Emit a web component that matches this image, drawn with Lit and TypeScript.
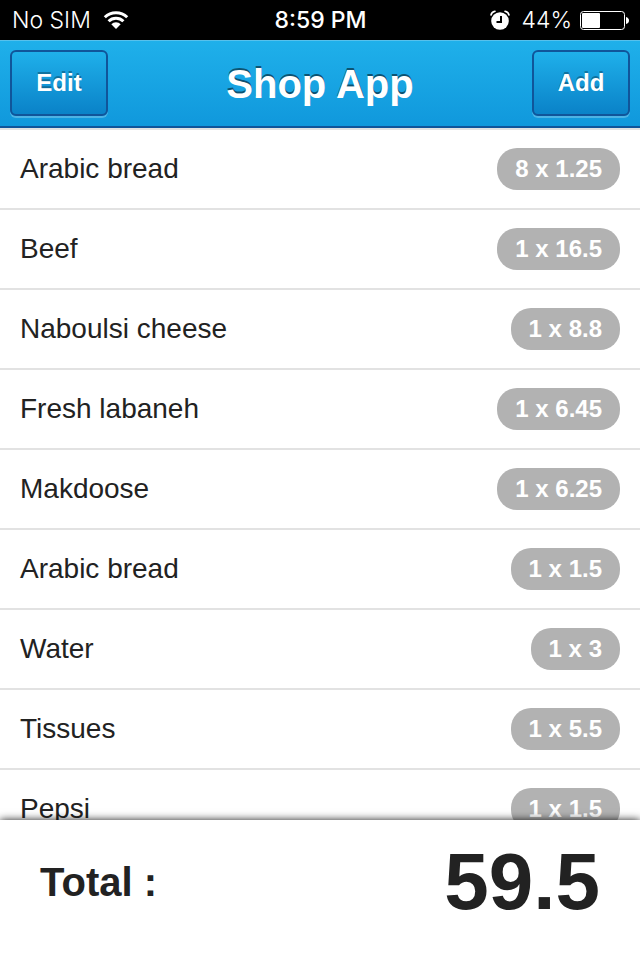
import { LitElement, html, css } from "lit";
import { customElement, property, state } from "lit/decorators.js";

interface Item {
  name: string;
  quantity: number;
  price: number;
}

@customElement("status-bar")
class StatusBar extends LitElement {
  @property({ type: Number }) battery = 44;

  static styles = css`
    :host {
      display: grid;
      grid-template-columns: 1fr auto 1fr;
      align-items: center;
      height: 40px;
      padding: 0 11px 0 12px;
      background: #000;
      color: #fff;
      font-family: Inter, "Liberation Sans", sans-serif;
      font-size: 23px;
      font-weight: 300;
      line-height: 40px;
    }
    .side {
      display: flex;
      align-items: center;
    }
    .wifi {
      margin-left: 12px;
    }
    .time {
      font-weight: 500;
    }
    .right {
      justify-content: flex-end;
    }
    .alarm {
      margin-right: 12px;
    }
    .battery {
      margin-left: 8px;
    }
    svg {
      display: block;
    }
  `;

  render() {
    return html`
      <div class="side">
        <span>No SIM</span>
        <svg class="wifi" width="26" height="20" viewBox="0 0 26 20" aria-label="Wi-Fi">
          <g fill="none" stroke="#fff" stroke-width="3">
            <path d="M1.8 7.2A16 16 0 0 1 24.2 7.2" />
            <path d="M5.6 11.2A10.5 10.5 0 0 1 20.4 11.2" />
          </g>
          <path fill="#fff" d="M13 19L8.3 14.3A6.6 6.6 0 0 1 17.7 14.3Z" />
        </svg>
      </div>
      <span class="time">8:59 PM</span>
      <div class="side right">
        <svg class="alarm" width="20" height="20" viewBox="0 0 20 20" aria-label="Alarm">
          <circle cx="10" cy="11" r="8.8" fill="#fff" />
          <path d="M11 6v6H6.5" fill="none" stroke="#000" stroke-width="2" />
          <path
            d="M1 5Q1.5 2 5 1.2M19 5Q18.5 2 15 1.2"
            fill="none"
            stroke="#fff"
            stroke-width="1.6"
            stroke-linecap="round"
          />
        </svg>
        <span>${this.battery}%</span>
        <svg class="battery" width="49" height="20" viewBox="0 0 49 20" aria-label="Battery">
          <rect x="0.5" y="1.5" width="44" height="18" rx="3" fill="none" stroke="#fff" />
          <rect x="2" y="3" width=${Math.round(this.battery * 0.41)} height="15" rx="1" fill="#fff" />
          <path d="M46 7q3 1 3 3.500t-3 3.500z" fill="#fff" />
        </svg>
      </div>
    `;
  }
}

@customElement("shop-row")
class ShopRow extends LitElement {
  @property({ attribute: false }) item!: Item;

  static styles = css`
    :host {
      display: flex;
      align-items: center;
      justify-content: space-between;
      box-sizing: border-box;
      min-height: 80px;
      padding: 0 20px;
      border-top: 2px solid #e2e2e2;
      color: #222;
      font-size: 28px;
      line-height: 32px;
    }
    .badge {
      padding: 0 18px;
      border-radius: 20px;
      background: #b2b2b2;
      color: #fff;
      font-size: 24px;
      font-weight: 700;
      line-height: 42px;
      white-space: nowrap;
    }
  `;

  render() {
    return html`
      <span>${this.item.name}</span>
      <span class="badge">${this.item.quantity} x ${this.item.price}</span>
    `;
  }
}

@customElement("app-root")
class AppRoot extends LitElement {
  @state() private items: Item[] = [
    { name: "Arabic bread", quantity: 8, price: 1.25 },
    { name: "Beef", quantity: 1, price: 16.5 },
    { name: "Naboulsi cheese", quantity: 1, price: 8.8 },
    { name: "Fresh labaneh", quantity: 1, price: 6.45 },
    { name: "Makdoose", quantity: 1, price: 6.25 },
    { name: "Arabic bread", quantity: 1, price: 1.5 },
    { name: "Water", quantity: 1, price: 3 },
    { name: "Tissues", quantity: 1, price: 5.5 },
    { name: "Pepsi", quantity: 1, price: 1.5 },
  ];

  static styles = css`
    :host {
      display: flex;
      flex-direction: column;
      height: 100vh;
      overflow: hidden;
      background: #fff;
      color: #222;
      font-family: "Liberation Sans", Arial, sans-serif;
    }
    .header {
      display: flex;
      align-items: center;
      justify-content: space-between;
      padding: 9px 10px;
      border-top: 1px solid #57c1ec;
      border-bottom: 2px solid #10559a;
      background: linear-gradient(#1fb0ea, #1098dc);
      color: #fff;
    }
    .title {
      margin: 0;
      font-size: 40px;
      font-weight: 700;
      line-height: 48px;
      text-shadow: 0 -2px 0 rgba(0, 0, 0, 0.5);
    }
    .button {
      box-sizing: border-box;
      width: 98px;
      height: 66px;
      margin: 0 0 1px;
      padding: 0;
      border: 2px solid #10559a;
      border-radius: 6px;
      background: linear-gradient(#1fb0ea, #0a82c8);
      box-shadow: 0 2px 0 rgba(255, 255, 255, 0.25);
      color: #fff;
      font-family: inherit;
      font-size: 24px;
      font-weight: 700;
      line-height: 32px;
      text-shadow: 0 -2px 0 rgba(0, 0, 0, 0.3);
    }
    .list {
      flex: 1;
      min-height: 0;
      margin: 0;
      padding: 0;
      overflow-y: auto;
      scrollbar-width: none;
      list-style: none;
    }
    .footer {
      display: flex;
      align-items: center;
      justify-content: space-between;
      position: relative;
      padding: 16px 40px 32px;
      background: #fff;
      box-shadow: 0 0 8px rgba(0, 0, 0, 0.9);
      font-weight: 700;
    }
    .label {
      font-size: 40px;
      line-height: 48px;
    }
    .sum {
      font-size: 80px;
      line-height: 92px;
    }
  `;

  render() {
    return html`
      <status-bar></status-bar>
      <header class="header">
        <button class="button" type="button">Edit</button>
        <h1 class="title">Shop App</h1>
        <button class="button" type="button">Add</button>
      </header>
      <ul class="list">
        ${this.items.map((item) => html`<li><shop-row .item=${item}></shop-row></li>`)}
      </ul>
      <footer class="footer">
        <span class="label">Total :</span>
        <output class="sum">59.5</output>
      </footer>
    `;
  }
}
